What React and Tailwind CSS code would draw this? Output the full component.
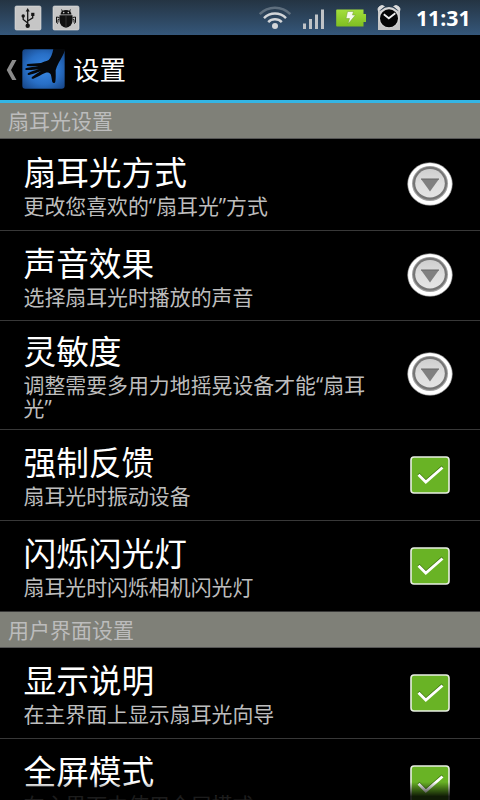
const SANS = "font-['Open_Sans','Noto_Sans_CJK_SC',sans-serif]"

function UsbIcon() {
  return (
    <svg className="h-[26px] w-[28px]" viewBox="0 0 28 26">
      <rect x="1" y="1" width="26" height="24" rx="1.5" fill="#c6c6c6" stroke="#e2e2e2" strokeWidth="0.6" />
      <g fill="none" stroke="#161616" strokeWidth="1.3">
        <path d="M13.7 6v14M13.7 18l-4.5-3.5v-3.2M13.7 16l5-3.2v-3" />
      </g>
      <path d="M13.7 3l2 3.4h-4z" fill="#161616" />
      <circle cx="13.7" cy="20.8" r="2.2" fill="#161616" />
      <circle cx="9.2" cy="11" r="1.7" fill="#161616" />
      <rect x="17.2" y="7.8" width="3.2" height="3.2" fill="#161616" />
    </svg>
  )
}

function DebugIcon() {
  return (
    <svg className="h-[26px] w-[28px]" viewBox="0 0 28 26">
      <rect x="1" y="1" width="26" height="24" rx="1.5" fill="#c6c6c6" stroke="#e2e2e2" strokeWidth="0.6" />
      <g fill="none" stroke="#111" strokeWidth="1">
        <path d="M10.8 7L9.6 4.5M17.2 7l1.2-2.5M7.5 12.5l-3-.5v5.5l1.5 1M20.5 12.5l3-.5v5.5l-1.5 1M7.5 14l-1.5.5v3M20.5 14l1.5.5v3" />
      </g>
      <path d="M8.5 9.6a5.5 4.6 0 0 1 11 0z" fill="#111" />
      <path d="M7.5 10.3h13v5.2a6.5 7.2 0 0 1-13 0z" fill="#111" />
      <path d="M14 11v11" stroke="#444" strokeWidth="0.7" />
      <circle cx="11.7" cy="7.6" r="0.8" fill="#ccc" />
      <circle cx="16.3" cy="7.6" r="0.8" fill="#ccc" />
    </svg>
  )
}

function WifiIcon() {
  return (
    <svg className="h-[24px] w-[34px]" viewBox="0 0 34 24" fill="none" strokeWidth="2.5">
      <path d="M1.7 8.1a21.5 21.5 0 0 1 30.6 0" stroke="#5f6f7e" />
      <path d="M6 12.1a15.6 15.6 0 0 1 22 0" stroke="#d3d6d9" />
      <path d="M10.2 16.1a9.7 9.7 0 0 1 13.6 0" stroke="#d3d6d9" />
      <circle cx="17" cy="20" r="3" fill="#d3d6d9" />
    </svg>
  )
}

function SignalIcon() {
  return (
    <svg className="h-[21px] w-[22px]" viewBox="0 0 22 21" fill="#bfc3c7">
      <rect x="0" y="14.5" width="3" height="5.5" />
      <rect x="6" y="10" width="3" height="10" />
      <rect x="12" y="5.5" width="3" height="14.5" />
      <rect x="18" y="0.5" width="3" height="19.5" />
    </svg>
  )
}

function BatteryIcon() {
  return (
    <svg className="h-[18px] w-[31px]" viewBox="0 0 31 18">
      <defs>
        <linearGradient id="battery" x2="0" y2="1">
          <stop stopColor="#a3df3c" />
          <stop offset="1" stopColor="#7fbe22" />
        </linearGradient>
      </defs>
      <path d="M1 .5h26.5V5H30v8h-2.5v4.5H1a.8.8 0 0 1-.8-.8V1.3A.8.8 0 0 1 1 .5z" fill="url(#battery)" />
      <path d="M11.5 2.5h6l-1 3.5h3L12 15l1.5-5.5H10z" fill="#f5faee" stroke="#719f2b" strokeWidth="0.5" />
    </svg>
  )
}

function AlarmIcon() {
  return (
    <svg className="h-[26px] w-[24px]" viewBox="0 0 24 26">
      <path d="M1 5.5h22V25H1z" fill="#c6c6c6" />
      <path d="M1.5 6.5a4 4 0 0 1 6-5M22.5 6.5a4 4 0 0 0-6-5" fill="#ddd" stroke="#ddd" />
      <circle cx="12" cy="12.5" r="10.5" fill="#d6d6d6" />
      <circle cx="12" cy="13.3" r="9" fill="#050505" />
      <path d="M6.8 9.3l5 4 6.5-5" fill="none" stroke="#eee" strokeWidth="1.8" />
    </svg>
  )
}

function StatusBar() {
  return (
    <div className="flex h-[35px] items-center bg-linear-to-b from-[#243443] to-[#35577a] pr-[9px] pl-[14px]">
      <UsbIcon />
      <div className="w-[10px]" />
      <DebugIcon />
      <div className="ml-auto flex items-center">
        <WifiIcon />
        <div className="ml-[11px] pt-[3px]"><SignalIcon /></div>
        <div className="ml-[11px]"><BatteryIcon /></div>
        <div className="ml-[10px]"><AlarmIcon /></div>
        <span className="ml-[15px] w-[55px] text-[21.2px] leading-[24px] font-bold whitespace-nowrap text-white">11:31</span>
      </div>
    </div>
  )
}

function HandLogo() {
  return (
    <svg className="h-[40px] w-[43px]" viewBox="0 0 129 120">
      <defs>
        <radialGradient id="logo" cx="0.5" cy="0.5" r="0.7">
          <stop stopColor="#3b8ae6" />
          <stop offset="0.55" stopColor="#286fc6" />
          <stop offset="1" stopColor="#164383" />
        </radialGradient>
      </defs>
      <rect x="1" y="1" width="127" height="118" rx="9" fill="url(#logo)" />
      <path
        d="M94 0c-3 14-7 27-14 33-9 4-16 6-23 9-14 1-27 2-40 3-4 1-4 6 0 6 12 1 23 1 33 0-13 3-26 4-37 6-5 1-4 6 0 6 13 1 26-1 38-3-11 4-22 7-32 12-4 2-2 7 2 6 13-3 25-7 36-12-9 6-18 11-27 18-3 3 0 7 4 5 13-6 25-13 37-18 7-1 12 0 15 5 3 8 3 16 5 23 2 4 8 4 9-1 2-11 1-23 1-34 4-14 9-23 14-31 5-10 10-18 13-28V0z"
        fill="#05070a"
      />
    </svg>
  )
}

function ActionBar() {
  return (
    <div className="flex h-[68px] items-center border-b-3 border-[#33b5e5] bg-black pl-[6px]">
      <svg className="mt-[4px] h-[20px] w-[11px]" viewBox="0 0 11 20">
        <path d="M6.2 0H10.5L5 10l5.5 10H6.2L.7 10z" fill="#8b8b8b" />
      </svg>
      <div className="ml-[5px] pt-[3px]"><HandLogo /></div>
      <h1 className="ml-[8px] pt-[4px] text-[26.5px] leading-[34px] text-white">设置</h1>
    </div>
  )
}

function SectionHeader({ title, className }) {
  return (
    <h2 className={`flex items-center border-b border-[#555] bg-[#7f8078] pl-[8px] text-[21px] leading-[24px] text-[#bcbcbc] ${className}`}>
      {title}
    </h2>
  )
}

function MoreButton() {
  return (
    <svg className="h-[44px] w-[46px]" viewBox="0 0 46 44">
      <defs>
        <linearGradient id="knob" x2="0" y2="1">
          <stop stopColor="#cecece" />
          <stop offset="0.5" stopColor="#dedede" />
          <stop offset="1" stopColor="#e4e4e4" />
        </linearGradient>
      </defs>
      <ellipse cx="23" cy="22" rx="22.3" ry="21.3" fill="#fff" stroke="#999" strokeWidth="0.6" />
      <ellipse cx="23" cy="21.5" rx="18" ry="17.5" fill="#a0a0a0" />
      <ellipse cx="23" cy="21.3" rx="17" ry="16.5" fill="#757575" />
      <ellipse cx="23" cy="21.3" rx="14.8" ry="14.2" fill="url(#knob)" />
      <path d="M14 17h18l-9 12.5z" fill="#808080" />
      <path d="M14 17h18" stroke="#666" />
    </svg>
  )
}

function CheckBox() {
  return (
    <svg className="h-[38px] w-[40px]" viewBox="0 0 40 38">
      <rect x="1" y="1" width="38" height="36" rx="3" fill="#69b325" stroke="#e9efe3" strokeWidth="1.6" />
      <path d="M8.5 17.8l7.3 7.2L32.5 10.5" fill="none" stroke="#3f7510" strokeWidth="2.6" />
      <path d="M8.5 18.8l7.3 7.2L32.5 11.5" fill="none" stroke="#fff" strokeWidth="2.8" />
    </svg>
  )
}

function PreferenceRow({ title, summary, checked, className }) {
  return (
    <div className={`flex shrink-0 items-start border-b border-[#383838] pl-[23.5px] ${className}`}>
      <div className="w-[356px]">
        <div className="text-[32.7px] leading-[38px] text-white">{title}</div>
        <div className="mt-[3px] text-[20.9px] leading-[23px] text-[#bdbdbd]">{summary}</div>
      </div>
      <div className="ml-[24.5px] flex w-[52px] items-center justify-center self-center">
        {checked ? <CheckBox /> : <MoreButton />}
      </div>
    </div>
  )
}

const slapSettings = [
  { title: '扇耳光方式', summary: '更改您喜欢的“扇耳光”方式', className: 'h-[92px] pt-[15px] [&>*:last-child]:-mt-[16px]' },
  { title: '声音效果', summary: '选择扇耳光时播放的声音', className: 'h-[90px] pt-[14px] [&>*:last-child]:-mt-[15px]' },
  { title: '灵敏度', summary: '调整需要多用力地摇晃设备才能“扇耳光”', className: 'h-[109px] pt-[12px] [&>*:last-child]:-mt-[14px]' },
  { title: '强制反馈', summary: '扇耳光时振动设备', checked: true, className: 'h-[91px] pt-[14px] [&>*:last-child]:-mt-[14px]' },
  { title: '闪烁闪光灯', summary: '扇耳光时闪烁相机闪光灯', checked: true, className: 'h-[91px] pt-[14px] [&>*:last-child]:-mt-[14px]' },
]

const uiSettings = [
  { title: '显示说明', summary: '在主界面上显示扇耳光向导', checked: true, className: 'h-[91px] pt-[14px] [&>*:last-child]:-mt-[14px]' },
  { title: '全屏模式', summary: '在主界面中使用全屏模式', checked: true, className: 'h-[91px] pt-[14px] [&>*:last-child]:-mt-[14px]' },
]

export default function App() {
  return (
    <div className={`relative flex h-[800px] w-[480px] flex-col overflow-hidden bg-black ${SANS}`} lang="zh-CN">
      <StatusBar />
      <ActionBar />
      <main className="flex min-h-0 flex-1 flex-col overflow-hidden">
        <SectionHeader title="扇耳光设置" className="h-[36px] shrink-0" />
        {slapSettings.map((item) => (
          <PreferenceRow key={item.title} {...item} />
        ))}
        <SectionHeader title="用户界面设置" className="h-[36px] shrink-0" />
        {uiSettings.map((item) => (
          <PreferenceRow key={item.title} {...item} />
        ))}
      </main>
      {/* Fading edge of the scrolling list */}
      <div className="pointer-events-none absolute inset-x-0 bottom-0 h-[18px] bg-linear-to-b from-transparent to-black/85 to-80%" />
    </div>
  )
}
